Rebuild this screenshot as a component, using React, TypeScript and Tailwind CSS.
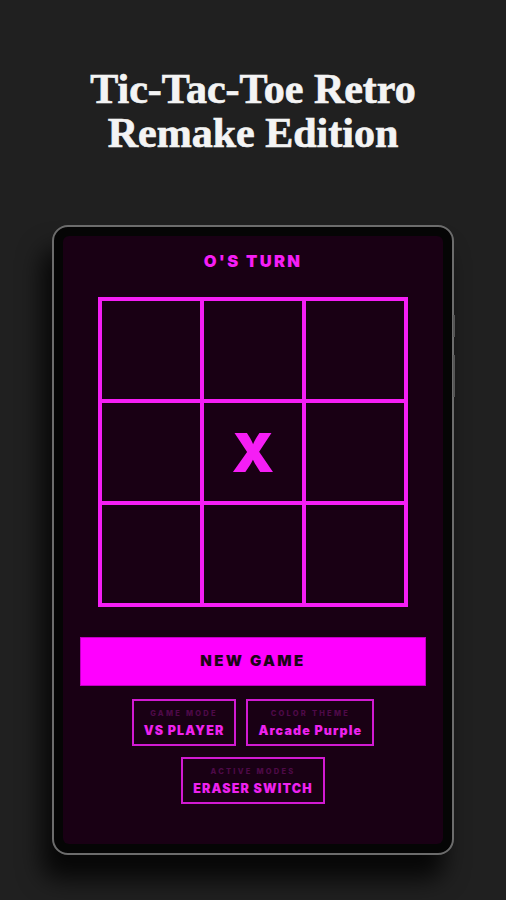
import React from 'react';

const cells = ['', '', '', '', 'X', '', '', '', ''];

function Badge({ label, value }: { label: string; value: string }) {
  return (
    <div className="flex flex-col items-center border-2 border-[#d21ad2] px-[10px] pt-[8px] pb-[5px]">
      <span className="text-[7.5px] leading-[9px] font-extrabold tracking-[0.3em] text-[#4e0a48] uppercase">
        {label}
      </span>
      <span className="mt-[5px] text-[12.5px] leading-[16px] font-black tracking-[0.09em] text-[#ee22ee]">
        {value}
      </span>
    </div>
  );
}

export default function App() {
  return (
    <div
      className="h-[900px] w-full overflow-hidden bg-[#202020] flex flex-col items-center"
      style={{ fontFamily: 'Inter, "Noto Sans", sans-serif' }}
    >
      {/* Title */}
      <h1
        className="mt-[67px] text-center text-[42px] leading-[44px] font-bold text-[#f4f4f4] [-webkit-text-stroke:0.7px_#f4f4f4]"
        style={{ fontFamily: '"Liberation Serif", "DejaVu Serif", serif' }}
      >
        Tic-Tac-Toe Retro
        <br />
        Remake Edition
      </h1>

      {/* Device */}
      <div className="relative mt-[70px] w-[402px] h-[630px] rounded-[16px] border-2 border-[#6c6c6c] bg-[#050505] p-[9px] shadow-[-10px_24px_24px_rgba(0,0,0,0.8)]">
        {/* side buttons */}
        <div className="absolute right-[-3px] top-[88px] w-[2px] h-[22px] bg-[#555]" />
        <div className="absolute right-[-3px] top-[128px] w-[2px] h-[42px] bg-[#555]" />

        <div className="h-full w-full rounded-[6px] bg-[#190014] flex flex-col items-center">
          <div className="mt-[15px] text-[16.5px] leading-[21px] font-black tracking-[0.14em] text-[#f51ef5]">
            O'S TURN
          </div>

          {/* Board */}
          <div className="mt-[25px] grid grid-cols-3 gap-[4px] bg-[#f51ef5] p-[4px]">
            {cells.map((c, i) => (
              <div
                key={i}
                className="w-[98px] h-[98px] bg-[#190014] flex items-center justify-center text-[54px] font-black text-[#f51ef5]"
              >
                {c}
              </div>
            ))}
          </div>

          <button className="mt-[30px] w-[346px] h-[49px] bg-[#ff00ff] border border-[#c000c0] text-[15px] font-black tracking-[0.16em] text-[#1c0418]">
            NEW GAME
          </button>

          <div className="mt-[13px] flex flex-col items-center gap-[11px]">
            <div className="flex gap-[10px]">
              <Badge label="Game Mode" value="VS PLAYER" />
              <Badge label="Color Theme" value="Arcade Purple" />
            </div>
            <Badge label="Active Modes" value="ERASER SWITCH" />
          </div>
        </div>
      </div>
    </div>
  );
}
